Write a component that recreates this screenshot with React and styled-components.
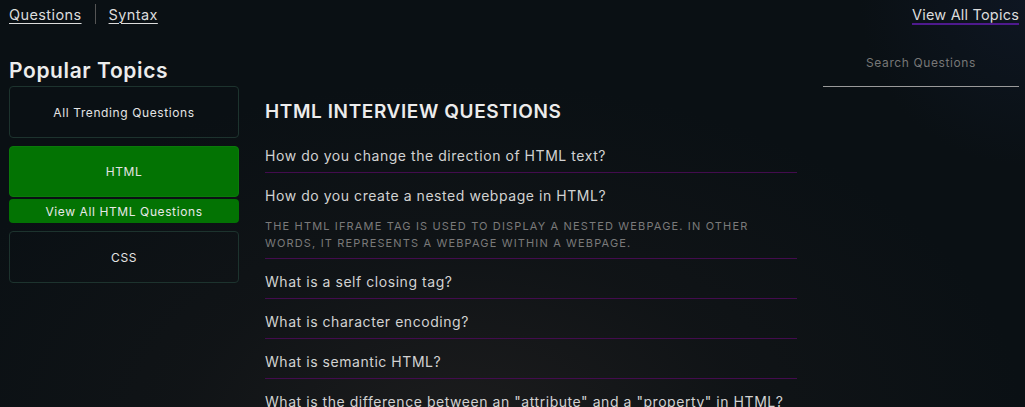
import React from "react";
import styled, { createGlobalStyle } from "styled-components";

const Global = createGlobalStyle`
  html, body { margin: 0; padding: 0; }
  body {
    min-height: 407px;
    overflow: hidden;
    font-family: Inter, "Noto Sans", sans-serif;
    background:
      radial-gradient(ellipse 55% 85% at 45% 105%, #1c1c1d 0%, rgba(20,22,24,0.6) 50%, rgba(11,16,20,0) 100%),
      radial-gradient(circle at 100% 0%, #0e1622 0%, rgba(11,16,20,0) 15%),
      #0a1014;
    color: #e6e6e6;
  }
`;

const Page = styled.div`
  width: 1025px;
  height: 407px;
  overflow: hidden;
`;

const Header = styled.header`
  display: flex;
  justify-content: space-between;
  align-items: center;
  height: 28px;
  padding: 0 6px 0 9px;
`;

const NavGroup = styled.nav`
  display: flex;
  align-items: center;
  gap: 13px;
`;

const NavLink = styled.a`
  font-size: 14.5px;
  letter-spacing: ${(p) => (p.$line ? "0.2px" : "0.4px")};
  color: #dcdcdc;
  text-decoration: underline;
  text-decoration-color: ${(p) => p.$line || "#dcdcdc"};
  text-decoration-thickness: ${(p) => (p.$line ? "2px" : "1px")};
  text-underline-offset: 3px;
  cursor: pointer;
`;

const Divider = styled.span`
  width: 1px;
  height: 20px;
  background: #555;
`;

const Content = styled.div`
  display: flex;
  align-items: flex-start;
`;

const Sidebar = styled.aside`
  width: 230px;
  margin-left: 9px;
  padding-top: 31px;
  display: flex;
  flex-direction: column;
`;

const SideTitle = styled.h2`
  margin: 0 0 3px;
  font-size: 21px;
  line-height: 24px;
  font-weight: 600;
  letter-spacing: 0.6px;
  color: #ececec;
`;

const TopicGroup = styled.div`
  display: flex;
  flex-direction: column;
  gap: 2px;
  margin-bottom: 8px;
`;

const TopicCard = styled.div`
  height: ${(p) => (p.$active ? "51px" : "52px")};
  box-sizing: border-box;
  border-radius: 4px;
  border: 1px solid ${(p) => (p.$active ? "#0a7a0a" : "#1d332e")};
  background: ${(p) => (p.$active ? "#037303" : "transparent")};
  display: flex;
  align-items: center;
  justify-content: center;
  font-size: 12px;
  letter-spacing: 0.6px;
  color: #e4e4e4;
`;

const SubButton = styled.div`
  height: 24px;
  border-radius: 4px;
  background: #037303;
  display: flex;
  align-items: center;
  justify-content: center;
  font-size: 12px;
  letter-spacing: 0.6px;
  color: #e8e8e8;
`;

const Main = styled.main`
  width: 532px;
  margin-left: 26px;
  padding-top: 72px;
`;

const MainTitle = styled.h1`
  margin: 0 0 9px;
  font-size: 19px;
  line-height: 24px;
  font-weight: 600;
  letter-spacing: 0.6px;
  color: #ececec;
`;

const QItem = styled.div`
  padding: 13px 0 6px;
  border-bottom: 1px solid #430c4e;
`;

const Question = styled.div`
  font-size: 14px;
  line-height: 20px;
  letter-spacing: 0.55px;
  color: #d2d2d2;
`;

const Answer = styled.p`
  margin: 12px 0 0;
  max-width: 490px;
  font-size: 11px;
  line-height: 17px;
  letter-spacing: 1.15px;
  text-transform: uppercase;
  color: #7a7a7a;
`;

const Right = styled.div`
  width: 196px;
  margin-left: 26px;
  padding-top: 22px;
`;

const SearchInput = styled.input`
  width: 100%;
  box-sizing: border-box;
  height: 37px;
  padding: 0 0 11px;
  background: transparent;
  border: none;
  border-bottom: 1.5px solid #9a9a9a;
  outline: none;
  text-align: center;
  font-family: Inter, "Noto Sans", sans-serif;
  font-size: 12px;
  letter-spacing: 0.6px;
  color: #ddd;
  &::placeholder { color: #777; }
`;

const questions = [
  { q: "How do you change the direction of HTML text?" },
  {
    q: "How do you create a nested webpage in HTML?",
    a: "The HTML iframe tag is used to display a nested webpage. In other words, it represents a webpage within a webpage.",
  },
  { q: "What is a self closing tag?" },
  { q: "What is character encoding?" },
  { q: "What is semantic HTML?" },
  { q: 'What is the difference between an "attribute" and a "property" in HTML?' },
];

export default function App() {
  return (
    <Page>
      <Global />
      <Header>
        <NavGroup>
          <NavLink>Questions</NavLink>
          <Divider />
          <NavLink>Syntax</NavLink>
        </NavGroup>
        <NavLink $line="#4e1a8e">View All Topics</NavLink>
      </Header>
      <Content>
        <Sidebar>
          <SideTitle>Popular Topics</SideTitle>
          <TopicGroup>
            <TopicCard>All Trending Questions</TopicCard>
          </TopicGroup>
          <TopicGroup>
            <TopicCard $active>HTML</TopicCard>
            <SubButton>View All HTML Questions</SubButton>
          </TopicGroup>
          <TopicGroup>
            <TopicCard>CSS</TopicCard>
          </TopicGroup>
        </Sidebar>
        <Main>
          <MainTitle>HTML INTERVIEW QUESTIONS</MainTitle>
          {questions.map((item) => (
            <QItem key={item.q}>
              <Question>{item.q}</Question>
              {item.a && <Answer>{item.a}</Answer>}
            </QItem>
          ))}
        </Main>
        <Right>
          <SearchInput placeholder="Search Questions" />
        </Right>
      </Content>
    </Page>
  );
}
